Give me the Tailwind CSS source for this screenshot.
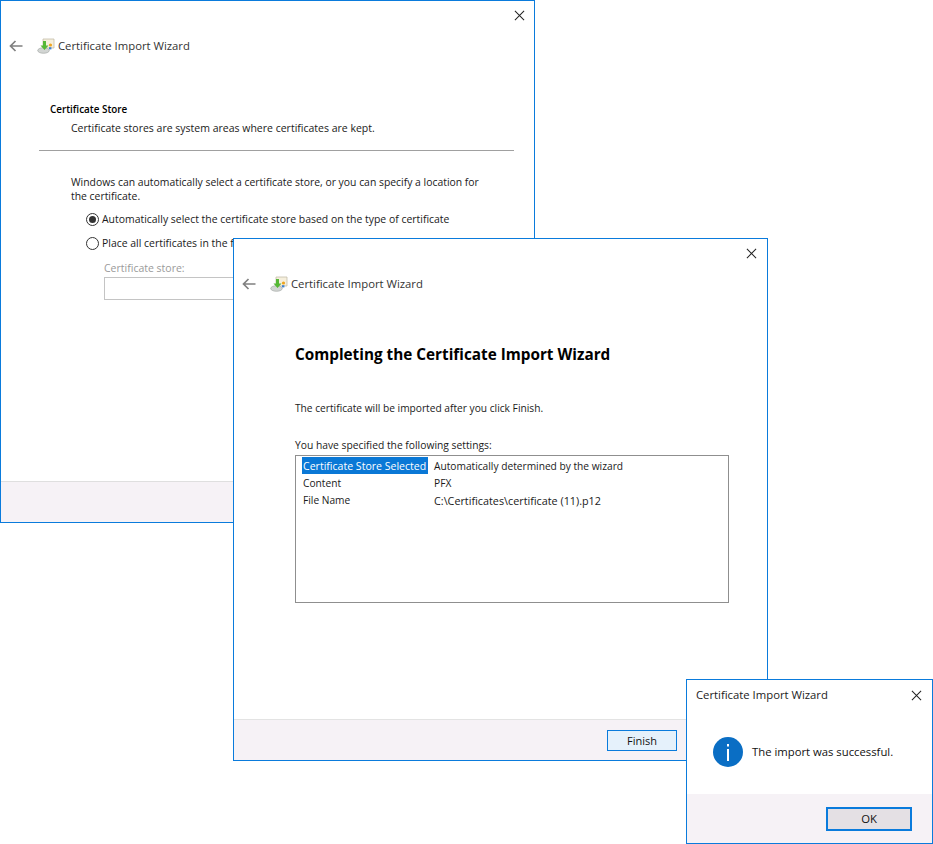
<!DOCTYPE html>
<html lang="en">
  <head>
    <meta charset="UTF-8" />
    <title>Certificate Import Wizard</title>
    <script src="https://cdn.jsdelivr.net/npm/@tailwindcss/browser@4"></script>
  </head>
  <body class="relative w-[933px] h-[844px] overflow-hidden bg-white font-['Open_Sans',sans-serif] text-[10.4px] text-[#1a1a1a]">
    <svg class="hidden">
      <symbol id="close" viewBox="0 0 12 12"><path d="M1 1l10 10M11 1L1 11" fill="none" stroke="#222" stroke-width="1.1" /></symbol>
      <symbol id="back" viewBox="0 0 14 12"><path d="M13.5 6H1.5M6.5 1L1.5 6l5 5" fill="none" stroke="#808080" stroke-width="1.7" /></symbol>
      <symbol id="cert" viewBox="0 0 18 16">
        <path d="M6 1h11v9H6z" fill="#f6efdc" stroke="#c4bea9" stroke-width=".8" />
        <ellipse cx="6.5" cy="12.5" rx="5.8" ry="2.8" fill="#d2d5d3" stroke="#9a9f9c" stroke-width=".6" />
        <path d="M6 3v4.5H3.5L7.5 12l4-4.5H9V3z" fill="#55b836" />
        <circle cx="13.5" cy="7" r="1.6" fill="#efa51f" />
        <rect x="12" y="9.2" width="2.4" height="2.2" fill="#3d7fd0" />
      </symbol>
    </svg>

    <!-- back window -->
    <div class="absolute left-0 top-0 flex h-[523px] w-[535px] flex-col border border-[#0a7bdc]">
      <div class="flex h-[30px] shrink-0 justify-end pr-[9px] pt-[9px]">
        <svg class="h-[11px] w-[11px]"><use href="#close" /></svg>
      </div>
      <div class="flex h-[30px] shrink-0 items-center pl-[8px]">
        <svg class="h-[12px] w-[14px]"><use href="#back" /></svg>
        <svg class="ml-[14px] h-[16px] w-[18px]"><use href="#cert" /></svg>
        <span class="ml-[3px] text-[11.3px] text-[#333]">Certificate Import Wizard</span>
      </div>
      <div class="flex-1 pl-[38px] pr-[20px] pt-[40px]">
        <div class="pl-[11px] text-[9.9px] font-semibold leading-[16px] text-black">Certificate Store</div>
        <div class="pl-[32px] pt-[3px] text-[10.5px] leading-[16px]">Certificate stores are system areas where certificates are kept.</div>
        <div class="mt-[14px] border-t border-[#a0a0a0]"></div>
        <div class="w-[445px] pl-[32px] pt-[24px] text-[10.4px] leading-[14px]">Windows can automatically select a certificate store, or you can specify a location for the certificate.</div>
        <div class="flex items-center gap-[3px] pl-[47px] pt-[8px] text-[10.45px] leading-[16px]">
          <span class="flex h-[13px] w-[13px] items-center justify-center rounded-full border border-[#333]"><span class="h-[7px] w-[7px] rounded-full bg-[#333]"></span></span>
          <span>Automatically select the certificate store based on the type of certificate</span>
        </div>
        <div class="flex items-center gap-[3px] pl-[47px] pt-[8px] text-[10.45px] leading-[16px]">
          <span class="h-[13px] w-[13px] rounded-full border border-[#333]"></span>
          <span class="whitespace-nowrap">Place all certificates in the following store</span>
        </div>
        <div class="pl-[65px] pt-[9px] text-[10.5px] leading-[16px] text-[#9a9a9a]">Certificate store:</div>
        <div class="ml-[65px] mt-[1px] h-[23px] w-[300px] border border-[#c4c4c4]"></div>
      </div>
      <div class="h-[41px] shrink-0 border-t border-[#dfdfdf] bg-[#f6f2f6]"></div>
    </div>

    <!-- completion window -->
    <div class="absolute left-[233px] top-[238px] flex h-[523px] w-[535px] flex-col border border-[#0a7bdc] bg-white">
      <div class="flex h-[30px] shrink-0 justify-end pr-[10px] pt-[9px]">
        <svg class="h-[11px] w-[11px]"><use href="#close" /></svg>
      </div>
      <div class="flex h-[30px] shrink-0 items-center pl-[8px]">
        <svg class="h-[12px] w-[14px]"><use href="#back" /></svg>
        <svg class="ml-[14px] h-[16px] w-[18px]"><use href="#cert" /></svg>
        <span class="ml-[3px] text-[11.3px] text-[#333]">Certificate Import Wizard</span>
      </div>
      <div class="flex-1 pl-[61px] pr-[38px]">
        <div class="pt-[44px] text-[15.3px] font-bold leading-[22px] text-black">Completing the Certificate Import Wizard</div>
        <div class="pt-[35px] text-[10.2px] leading-[16px]">The certificate will be imported after you click Finish.</div>
        <div class="pt-[21px] text-[10.3px] leading-[16px]">You have specified the following settings:</div>
        <div class="mt-[2px] grid h-[148px] content-start grid-cols-[128px_1fr] grid-rows-[17px_17px_17px] border border-[#8f8f8f] pl-[6px] pt-[1px] text-[10.2px] leading-[19px]">
          <span class="w-[126px] whitespace-nowrap bg-[#0a78d6] pl-[1px] text-[10.55px] text-white">Certificate Store Selected</span>
          <span class="pl-[4px]">Automatically determined by the wizard</span>
          <span class="pl-[1px]">Content</span>
          <span class="pl-[4px]">PFX</span>
          <span class="pl-[1px]">File Name</span>
          <span class="pl-[4px] text-[10.8px]">C:\Certificates\certificate (11).p12</span>
        </div>
      </div>
      <div class="flex h-[41px] shrink-0 items-center justify-end border-t border-[#e3e3e3] bg-[#f6f2f6] pr-[90px]">
        <button class="h-[21px] w-[70px] border border-[#0a7bdc] bg-[#e5f1fb] text-[11px] leading-[19px] text-[#111]">Finish</button>
      </div>
    </div>

    <!-- success message box -->
    <div class="absolute left-[686px] top-[679px] flex h-[165px] w-[247px] flex-col border border-[#0a7bdc] bg-white">
      <div class="flex h-[30px] shrink-0 items-center justify-between pl-[9px] pr-[10px]">
        <span class="text-[11.3px] text-[#222]">Certificate Import Wizard</span>
        <svg class="h-[11px] w-[11px]"><use href="#close" /></svg>
      </div>
      <div class="flex flex-1 items-center gap-[9px] pl-[26px]">
        <svg class="h-[30px] w-[30px]" viewBox="0 0 30 30">
          <circle cx="15" cy="15" r="15" fill="#0a6ec4" />
          <rect x="14" y="12" width="2" height="12" fill="#fff" />
          <rect x="14" y="7" width="2" height="2.5" fill="#fff" />
        </svg>
        <span class="text-[11.3px] text-[#111]">The import was successful.</span>
      </div>
      <div class="flex h-[49px] shrink-0 items-center justify-end bg-[#f6f2f6] pr-[20px]">
        <button class="h-[24px] w-[86px] border-2 border-[#0a7bdc] bg-[#e4e0e4] text-[11.3px] leading-[20px] text-[#111]">OK</button>
      </div>
    </div>
  </body>
</html>
